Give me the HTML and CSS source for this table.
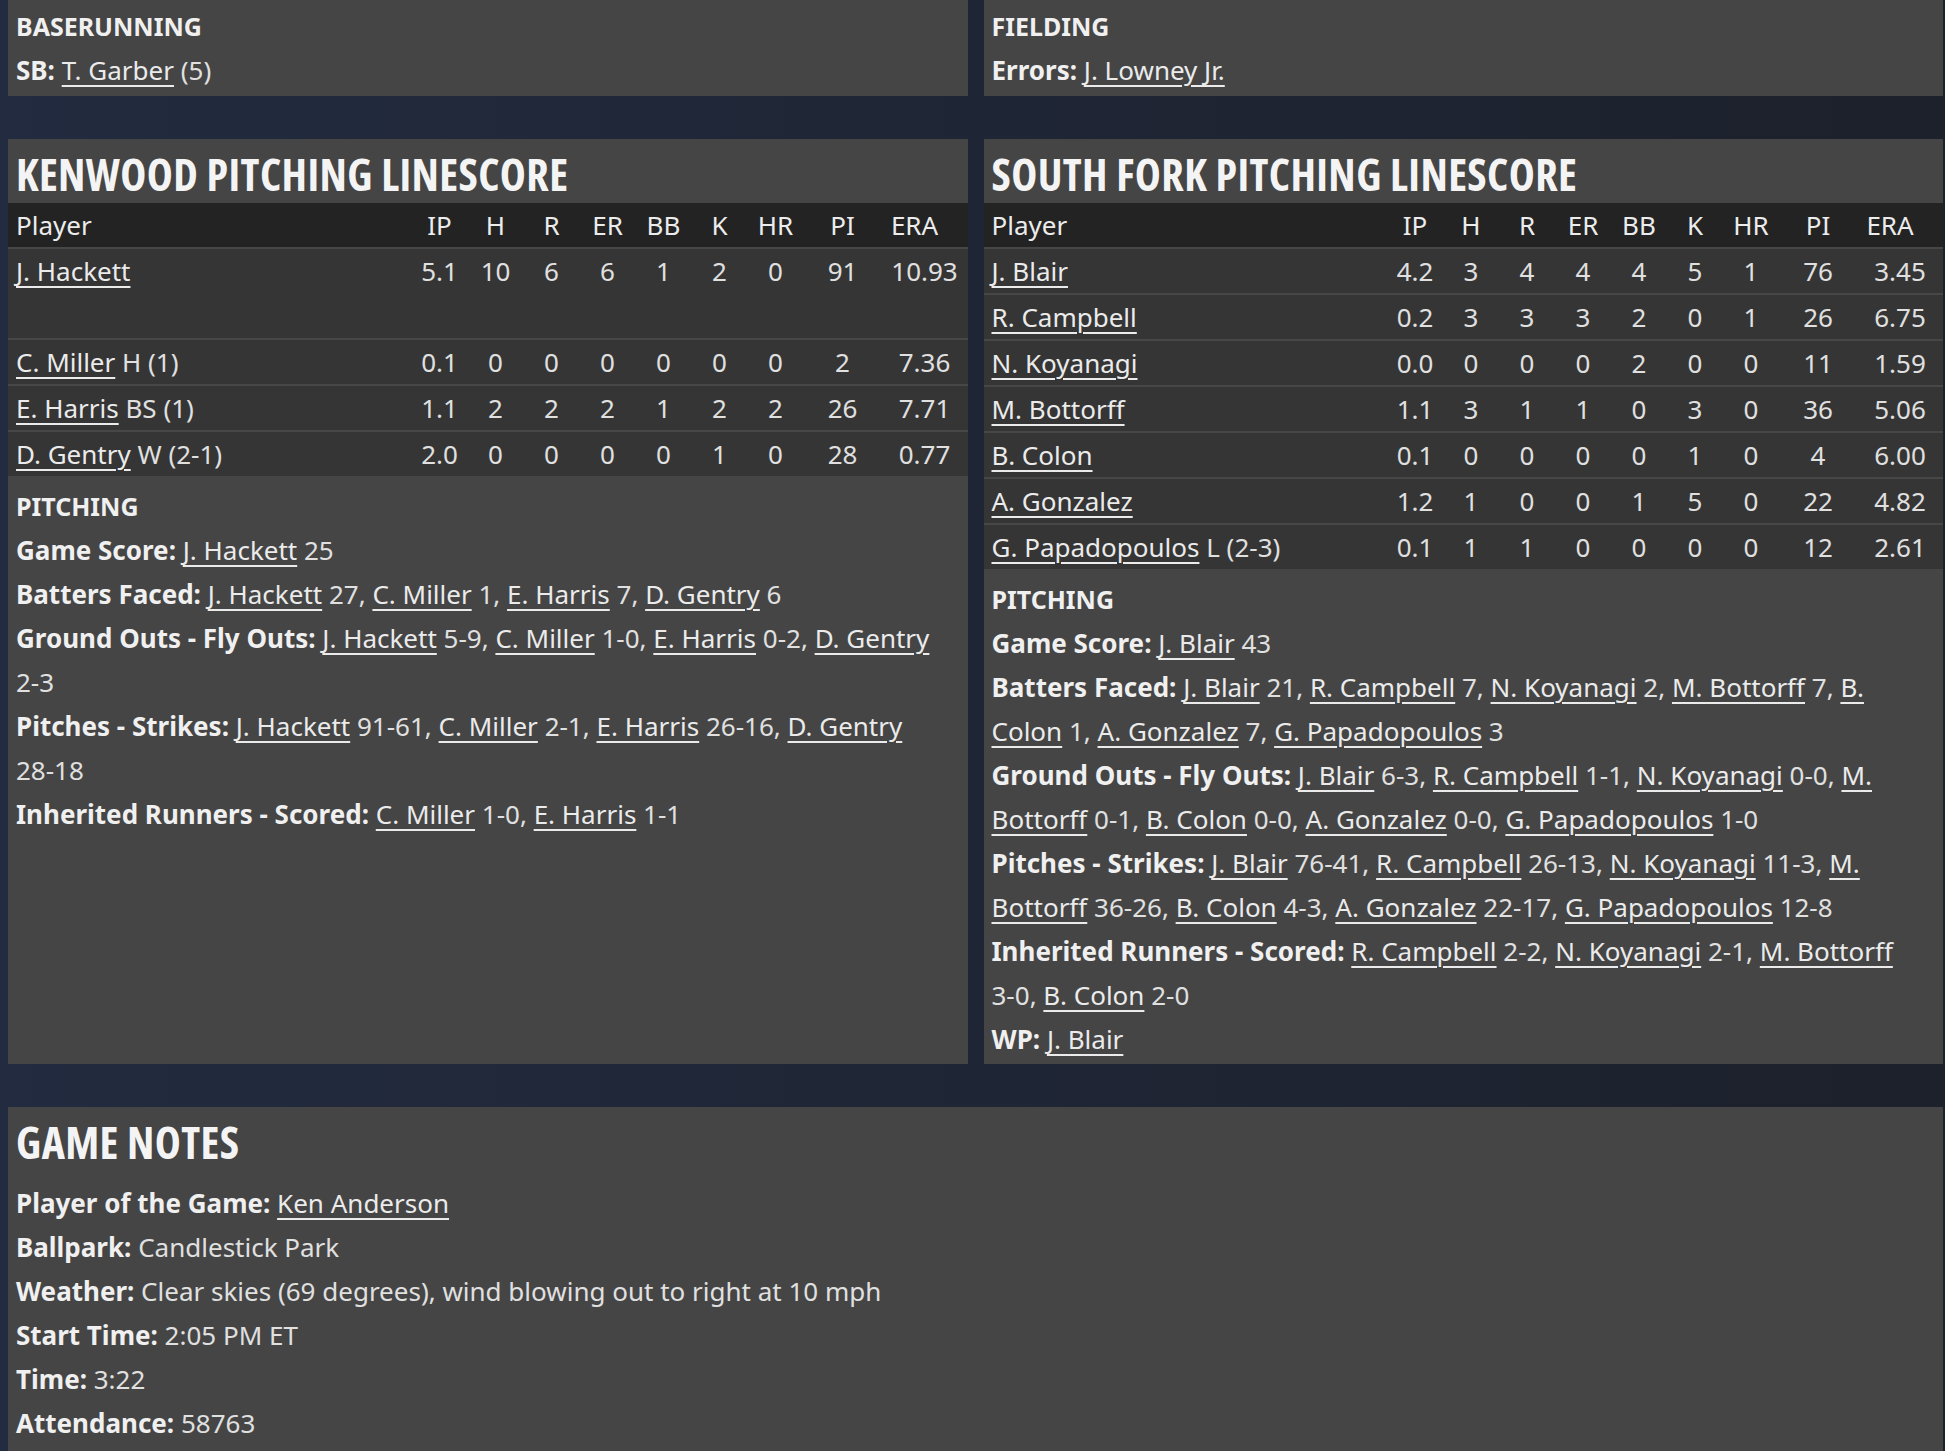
FILE: index.html
```html
<!DOCTYPE html>
<html lang="en">
<head>
<meta charset="utf-8">
<title>Box Score</title>
<link rel="stylesheet" href="styles.css">
</head>
<body>
<div class="grid top-row">
  <section class="panel small">
    <div class="subhead">BASERUNNING</div>
    <div class="line"><b>SB:</b> <a>T. Garber</a> (5)</div>
  </section>
  <section class="panel small">
    <div class="subhead">FIELDING</div>
    <div class="line"><b>Errors:</b> <a>J. Lowney Jr.</a></div>
  </section>
</div>

<div class="grid mid-row">
  <section class="panel">
    <h2 class="title">KENWOOD PITCHING LINESCORE</h2>
    <table class="ls">
      <thead>
        <tr><th class="pl">Player</th><th>IP</th><th>H</th><th>R</th><th>ER</th><th>BB</th><th>K</th><th>HR</th><th class="pi">PI</th><th class="era">ERA</th></tr>
      </thead>
      <tbody>
        <tr class="tall"><td class="pl"><a>J. Hackett</a></td><td>5.1</td><td>10</td><td>6</td><td>6</td><td>1</td><td>2</td><td>0</td><td>91</td><td>10.93</td></tr>
        <tr><td class="pl"><a>C. Miller</a> H (1)</td><td>0.1</td><td>0</td><td>0</td><td>0</td><td>0</td><td>0</td><td>0</td><td>2</td><td>7.36</td></tr>
        <tr><td class="pl"><a>E. Harris</a> BS (1)</td><td>1.1</td><td>2</td><td>2</td><td>2</td><td>1</td><td>2</td><td>2</td><td>26</td><td>7.71</td></tr>
        <tr><td class="pl"><a>D. Gentry</a> W (2-1)</td><td>2.0</td><td>0</td><td>0</td><td>0</td><td>0</td><td>1</td><td>0</td><td>28</td><td>0.77</td></tr>
      </tbody>
    </table>
    <div class="notes">
      <div class="subhead">PITCHING</div>
      <div class="line"><b>Game Score:</b> <a>J. Hackett</a> 25</div>
      <div class="line"><b>Batters Faced:</b> <a>J. Hackett</a> 27, <a>C. Miller</a> 1, <a>E. Harris</a> 7, <a>D. Gentry</a> 6</div>
      <div class="line"><b>Ground Outs - Fly Outs:</b> <a>J. Hackett</a> <span class="v">5-9</span>, <a>C. Miller</a> <span class="v">1-0</span>, <a>E. Harris</a> <span class="v">0-2</span>, <a>D. Gentry</a> <span class="v">2-3</span></div>
      <div class="line"><b>Pitches - Strikes:</b> <a>J. Hackett</a> <span class="v">91-61</span>, <a>C. Miller</a> <span class="v">2-1</span>, <a>E. Harris</a> <span class="v">26-16</span>, <a>D. Gentry</a> <span class="v">28-18</span></div>
      <div class="line"><b>Inherited Runners - Scored:</b> <a>C. Miller</a> <span class="v">1-0</span>, <a>E. Harris</a> <span class="v">1-1</span></div>
    </div>
  </section>

  <section class="panel">
    <h2 class="title">SOUTH FORK PITCHING LINESCORE</h2>
    <table class="ls">
      <thead>
        <tr><th class="pl">Player</th><th>IP</th><th>H</th><th>R</th><th>ER</th><th>BB</th><th>K</th><th>HR</th><th class="pi">PI</th><th class="era">ERA</th></tr>
      </thead>
      <tbody>
        <tr><td class="pl"><a>J. Blair</a></td><td>4.2</td><td>3</td><td>4</td><td>4</td><td>4</td><td>5</td><td>1</td><td>76</td><td>3.45</td></tr>
        <tr><td class="pl"><a>R. Campbell</a></td><td>0.2</td><td>3</td><td>3</td><td>3</td><td>2</td><td>0</td><td>1</td><td>26</td><td>6.75</td></tr>
        <tr><td class="pl"><a>N. Koyanagi</a></td><td>0.0</td><td>0</td><td>0</td><td>0</td><td>2</td><td>0</td><td>0</td><td>11</td><td>1.59</td></tr>
        <tr><td class="pl"><a>M. Bottorff</a></td><td>1.1</td><td>3</td><td>1</td><td>1</td><td>0</td><td>3</td><td>0</td><td>36</td><td>5.06</td></tr>
        <tr><td class="pl"><a>B. Colon</a></td><td>0.1</td><td>0</td><td>0</td><td>0</td><td>0</td><td>1</td><td>0</td><td>4</td><td>6.00</td></tr>
        <tr><td class="pl"><a>A. Gonzalez</a></td><td>1.2</td><td>1</td><td>0</td><td>0</td><td>1</td><td>5</td><td>0</td><td>22</td><td>4.82</td></tr>
        <tr><td class="pl"><a>G. Papadopoulos</a> L (2-3)</td><td>0.1</td><td>1</td><td>1</td><td>0</td><td>0</td><td>0</td><td>0</td><td>12</td><td>2.61</td></tr>
      </tbody>
    </table>
    <div class="notes">
      <div class="subhead">PITCHING</div>
      <div class="line"><b>Game Score:</b> <a>J. Blair</a> 43</div>
      <div class="line"><b>Batters Faced:</b> <a>J. Blair</a> 21, <a>R. Campbell</a> 7, <a>N. Koyanagi</a> 2, <a>M. Bottorff</a> 7, <a>B. Colon</a> 1, <a>A. Gonzalez</a> 7, <a>G. Papadopoulos</a> 3</div>
      <div class="line"><b>Ground Outs - Fly Outs:</b> <a>J. Blair</a> <span class="v">6-3</span>, <a>R. Campbell</a> <span class="v">1-1</span>, <a>N. Koyanagi</a> <span class="v">0-0</span>, <a>M. Bottorff</a> <span class="v">0-1</span>, <a>B. Colon</a> <span class="v">0-0</span>, <a>A. Gonzalez</a> <span class="v">0-0</span>, <a>G. Papadopoulos</a> <span class="v">1-0</span></div>
      <div class="line"><b>Pitches - Strikes:</b> <a>J. Blair</a> <span class="v">76-41</span>, <a>R. Campbell</a> <span class="v">26-13</span>, <a>N. Koyanagi</a> <span class="v">11-3</span>, <a>M. Bottorff</a> <span class="v">36-26</span>, <a>B. Colon</a> <span class="v">4-3</span>, <a>A. Gonzalez</a> <span class="v">22-17</span>, <a>G. Papadopoulos</a> <span class="v">12-8</span></div>
      <div class="line"><b>Inherited Runners - Scored:</b> <a>R. Campbell</a> <span class="v">2-2</span>, <a>N. Koyanagi</a> <span class="v">2-1</span>, <a>M. Bottorff</a> <span class="v">3-0</span>, <a>B. Colon</a> <span class="v">2-0</span></div>
      <div class="line"><b>WP:</b> <a>J. Blair</a></div>
    </div>
  </section>
</div>

<section class="panel game-notes">
  <h2 class="title">GAME NOTES</h2>
  <div class="notes gn">
    <div class="line"><b>Player of the Game:</b> <a>Ken Anderson</a></div>
    <div class="line"><b>Ballpark:</b> Candlestick Park</div>
    <div class="line"><b>Weather:</b> Clear skies (69 degrees), wind blowing out to right at 10 mph</div>
    <div class="line"><b>Start Time:</b> 2:05 PM ET</div>
    <div class="line"><b>Time:</b> 3:22</div>
    <div class="line"><b>Attendance:</b> 58763</div>
  </div>
</section>
</body>
</html>
```

FILE: styles.css
```css
html, body {
  margin: 0;
  padding: 0;
}
body {
  background: linear-gradient(90deg, #222b3f 0%, #1f2636 45%, #1c212b 100%);
  color: #e0e0e0;
  font-family: "Noto Sans", "Open Sans", sans-serif;
  font-size: 26px;
  padding: 0 2px 0 8px;
  min-height: 1451px;
  box-sizing: border-box;
  overflow: hidden;
}
.grid {
  display: grid;
  grid-template-columns: 1fr 1fr;
  column-gap: 16px;
}
.top-row {
  margin-bottom: 43px;
}
.mid-row {
  margin-bottom: 43px;
}
.panel {
  background: #454545;
}
.small {
  padding: 4px 8px 4px 8px;
}
.subhead {
  font-weight: bold;
  font-size: 25px;
  line-height: 44px;
  color: #f0f0f0;
}
.line {
  line-height: 44px;
}
.line b {
  font-weight: bold;
  color: #f0f0f0;
}
.v {
  white-space: nowrap;
}
a {
  color: #ebebeb;
  text-decoration: underline;
  text-decoration-thickness: 2px;
  text-underline-offset: 5px;
}
.title {
  margin: 0;
  padding: 6px 8px 0 8px;
  height: 58px;
  line-height: 58px;
  font-family: "Open Sans", sans-serif;
  font-stretch: 75%;
  font-size: 44px;
  letter-spacing: 0.4px;
  font-weight: bold;
  color: #f4f4f4;
}
.ls {
  width: 100%;
  border-collapse: collapse;
  table-layout: fixed;
}
.ls th, .ls td {
  padding: 0;
  height: 44px;
  line-height: 44px;
  text-align: center;
  font-weight: normal;
  width: 56px;
  white-space: nowrap;
}
.ls .pl {
  width: auto;
  text-align: left;
  padding-left: 8px;
}
.ls .pi {
  width: 78px;
}
.ls .era {
  width: 86px;
  padding-right: 20px;
  box-sizing: border-box;
}
.ls thead tr {
  background: #232323;
  color: #ececec;
}
.ls tbody tr {
  background: #353535;
  border-top: 2px solid #474747;
}
.ls tbody tr.tall td {
  height: 89px;
  vertical-align: top;
}
.notes {
  padding: 8px 8px 3px 8px;
}
.game-notes {
  min-height: 400px;
}
.gn {
  padding-top: 10px;
}
```
